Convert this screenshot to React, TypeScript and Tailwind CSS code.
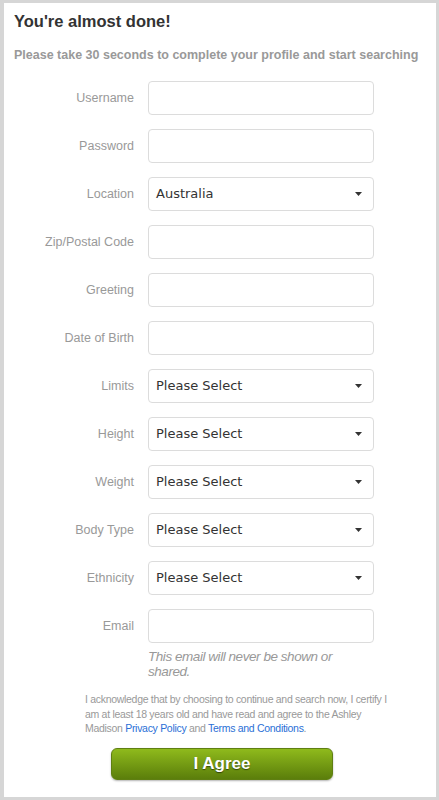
const fields: { label: string; type: 'input' | 'select'; value?: string }[] = [
  { label: 'Username', type: 'input' },
  { label: 'Password', type: 'input' },
  { label: 'Location', type: 'select', value: 'Australia' },
  { label: 'Zip/Postal Code', type: 'input' },
  { label: 'Greeting', type: 'input' },
  { label: 'Date of Birth', type: 'input' },
  { label: 'Limits', type: 'select', value: 'Please Select' },
  { label: 'Height', type: 'select', value: 'Please Select' },
  { label: 'Weight', type: 'select', value: 'Please Select' },
  { label: 'Body Type', type: 'select', value: 'Please Select' },
  { label: 'Ethnicity', type: 'select', value: 'Please Select' },
  { label: 'Email', type: 'input' },
];

function Field({ label, type, value }: { label: string; type: 'input' | 'select'; value?: string }) {
  return (
    <div className="flex items-center gap-[14px]">
      <label className="w-[130px] text-right text-[12.5px] text-[#999]">{label}</label>
      {type === 'input' ? (
        <div className="w-[226px] h-[34px] rounded-[4px] border border-[#dcdcdc] bg-white" />
      ) : (
        <div className="w-[226px] h-[34px] rounded-[4px] border border-[#dcdcdc] bg-white flex items-center justify-between pl-[7px] pr-[11px]">
          <span className="text-[13px] text-[#333] font-['DejaVu_Sans',sans-serif]">{value}</span>
          <svg width="7" height="4" viewBox="0 0 7 4">
            <path d="M0 0h7L3.5 4z" fill="#333" />
          </svg>
        </div>
      )}
    </div>
  );
}

export default function App() {
  return (
    <div className="w-[439px] h-[800px] bg-[#d6d6d6] pt-[3px] pl-[4px] pr-[3px] pb-[3px] font-['Liberation_Sans',Arial,sans-serif]">
      <div className="h-full bg-white pt-[8px]">
        <h1 className="pl-[10px] text-[16.5px] leading-[20px] font-bold text-[#333]">You're almost done!</h1>
        <p className="pl-[10px] mt-[15px] text-[12.5px] leading-[18px] font-bold text-[#999]">
          Please take 30 seconds to complete your profile and start searching
        </p>
        <div className="mt-[17px] flex flex-col gap-[14px]">
          {fields.map((f) => (
            <Field key={f.label} {...f} />
          ))}
        </div>
        <p className="ml-[144px] w-[205px] mt-[6px] text-[13.5px] leading-[15px] tracking-[-0.45px] italic text-[#999]">
          This email will never be shown or shared.
        </p>
        <p className="ml-[81px] w-[310px] mt-[13px] text-[10.5px] leading-[14.5px] tracking-[-0.3px] text-[#999]">
          I acknowledge that by choosing to continue and search now, I certify I am at least 18 years old and have read and agree to the Ashley Madison{' '}
          <a className="text-[#2a6fd6]">Privacy Policy</a> and <a className="text-[#2a6fd6]">Terms and Conditions</a>.
        </p>
        <div className="mt-[12px] ml-[107px] w-[222px] h-[32px] rounded-[6px] border border-[#5f7f12] bg-gradient-to-b from-[#8fba1c] to-[#5b7e0b] flex items-center justify-center text-white font-bold text-[17px] [text-shadow:0_1px_1px_rgba(0,0,0,0.5)] shadow-[0_1px_2px_rgba(0,0,0,0.3)]">
          I Agree
        </div>
      </div>
    </div>
  );
}
